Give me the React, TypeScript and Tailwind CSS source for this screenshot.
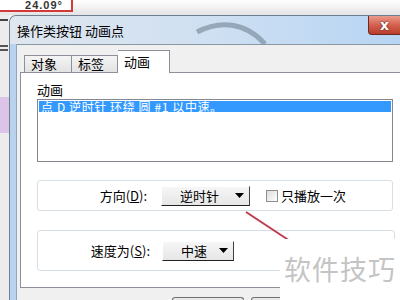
import React from "react";

const cjk = { fontFamily: '"Noto Sans CJK SC", "Noto Sans", sans-serif' };

function Caret() {
  return (
    <svg width="9" height="5" viewBox="0 0 9 5" className="shrink-0">
      <path d="M0 0h9L4.5 5z" fill="#000" />
    </svg>
  );
}

function Dropdown({ label, width }: { label: string; width: string }) {
  return (
    <div
      className={`flex h-[20px] ${width} items-center border border-t-white border-l-white border-r-[#404040] border-b-[#202020] bg-gradient-to-b from-[#f6f6f6] to-[#e6e6e6] pr-[5px] pl-[18px] text-[13px] text-black`}
    >
      <span className="flex-1">{label}</span>
      <Caret />
    </div>
  );
}

export default function App() {
  return (
    <div className="relative h-[300px] w-[400px] overflow-hidden bg-[#f2f2f2] text-black" style={cjk}>
      {/* desktop behind the dialog */}
      <div className="flex h-[15px] bg-gradient-to-b from-white to-[#e4e4e4]">
        <div className="flex h-[12px] w-[73px] items-start justify-end overflow-hidden border-r-2 border-b-2 border-[#d23a3a] bg-white pr-[8px]">
          <span className="text-[11px] leading-[11px] font-bold tracking-[1px] text-[#333]" style={{ fontFamily: '"Liberation Sans", sans-serif' }}>
            24.09°
          </span>
        </div>
      </div>

      <div className="flex">
        <div className="flex w-[9px] shrink-0 flex-col bg-[#ececec]">
          <div className="mt-[4px] h-[2px] w-[8px] bg-[#444]" />
          <div className="mt-[24px] h-[2px] w-[8px] bg-[#555]" />
          <div className="mt-[2px] h-[2px] w-[8px] bg-[#555]" />
          <div className="mt-[46px] h-[36px] w-[9px] bg-[#dcc4e8]" />
        </div>

        {/* window */}
        <div className="flex min-w-0 flex-1 flex-col overflow-hidden rounded-tl-[7px] border-t border-l border-[#6d7f92] bg-[#bcd5ee]">
          <div className="relative flex h-[28px] items-start bg-gradient-to-r from-[#dfe6ee] via-[#cfe0f2] to-[#b7d5f3]">
            <svg className="absolute top-0 left-[185px]" width="90" height="28" viewBox="0 0 90 28">
              <path d="M2 16 C 25 4, 50 6, 70 28" stroke="#5f6f80" strokeWidth="5" fill="none" opacity="0.5" />
            </svg>
            <span className="relative mt-[7px] ml-[7px] text-[13px] leading-[16px]">操作类按钮 动画点</span>
            <div className="relative ml-auto flex h-[19px] w-[32px] shrink-0 items-center justify-center rounded-bl-[4px] border border-t-0 border-r-0 border-[#6e2a22] bg-gradient-to-b from-[#e99a8c] via-[#d4614f] to-[#b83d2c]">
              <span className="text-[14px] leading-[14px] font-bold text-white" style={{ fontFamily: '"DejaVu Sans", sans-serif', textShadow: "0 0 2px #4a1010" }}>
                x
              </span>
            </div>
          </div>

          <div className="flex">
            <div className="w-[7px] shrink-0 border-r border-[#8fa6bd] bg-[#b9d3ee]" />
            <div className="min-w-0 flex-1 border-t border-[#8c96a0] bg-[#f0f0f0] pl-[3px]">
              {/* tabs */}
              <div className="flex h-[27px] items-end pl-[4px] text-[13px]">
                <div className="flex h-[17px] w-[48px] items-center border border-b-0 border-[#8d9099] bg-gradient-to-b from-[#f4f4f4] to-[#e3e3e3] pl-[6px]">
                  对象
                </div>
                <div className="flex h-[17px] w-[46px] items-center border border-b-0 border-l-0 border-[#8d9099] bg-gradient-to-b from-[#f4f4f4] to-[#e3e3e3] pl-[6px]">
                  标签
                </div>
                <div className="relative -mb-px flex h-[23px] w-[52px] items-center border border-b-0 border-l-0 border-[#8d9099] bg-white pl-[6px]">
                  动画
                </div>
              </div>

              {/* tab panel */}
              <div className="h-[216px] w-[400px] border border-[#8d9099] bg-white pt-[9px] pl-[16px]">
                <div className="text-[13px] leading-[16px]">动画</div>
                <div className="mt-[1px] h-[63px] w-[356px] border border-[#828790] bg-white p-px">
                  <div className="flex h-[11px] items-center bg-[#3399ff] pl-[2px] text-[12px] leading-[12px] tracking-[0.6px] whitespace-pre text-white">
                    {"点 D 逆时针 环绕 圆 #1 以中速。"}
                  </div>
                </div>

                <div className="mt-[18px] flex h-[31px] w-[356px] items-center rounded-[3px] border border-[#d5dfe5]">
                  <div className="w-[110px] pr-[1px] text-right text-[13px]">
                    方向(<u>D</u>):
                  </div>
                  <div className="ml-[13px]">
                    <Dropdown label="逆时针" width="w-[89px]" />
                  </div>
                  <div className="ml-[16px] h-[12px] w-[12px] border border-[#8f8f8f] bg-gradient-to-br from-[#dcdcdc] to-white" />
                  <span className="ml-[3px] text-[13px]">只播放一次</span>
                </div>

                <div className="mt-[19px] flex h-[41px] w-[358px] items-center rounded-[3px] border border-[#d5dfe5]">
                  <div className="w-[112px] text-right text-[13px]">
                    速度为(<u>S</u>):
                  </div>
                  <div className="ml-[12px]">
                    <Dropdown label="中速" width="w-[72px]" />
                  </div>
                </div>
              </div>

              <div className="flex gap-[7px] pt-[9px] pl-[152px]">
                <div className="h-[8px] w-[72px] rounded-t-[3px] border border-b-0 border-[#707070] bg-[#e8e8e8]" />
                <div className="h-[8px] w-[72px] rounded-t-[3px] border border-b-0 border-[#707070] bg-[#e8e8e8]" />
              </div>
            </div>
          </div>
        </div>
      </div>

      {/* annotation line */}
      <svg className="absolute top-[210px] left-[244px]" width="50" height="34" viewBox="0 0 50 34">
        <path d="M2 2 L46 31" stroke="#c0394c" strokeWidth="2" />
      </svg>

      {/* watermark */}
      <div className="absolute top-[239px] left-[280px] flex h-[61px] w-[120px] items-center justify-center bg-white">
        <span className="text-[27px] tracking-[1px] text-[#c4c4c4]">软件技巧</span>
      </div>
    </div>
  );
}
